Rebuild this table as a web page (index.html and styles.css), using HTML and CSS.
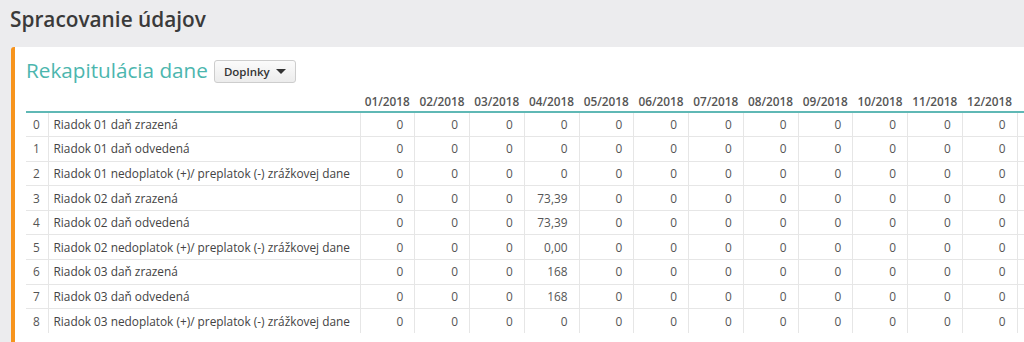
FILE: index.html
```html
<!DOCTYPE html>
<html lang="sk">
<head>
<meta charset="utf-8">
<title>Spracovanie údajov</title>
<link rel="stylesheet" href="styles.css">
</head>
<body>
<div class="page">
  <h1 class="page-title">Spracovanie údajov</h1>
  <div class="panel">
    <div class="panel-head">
      <h2 class="panel-title">Rekapitulácia dane</h2>
      <button class="btn">Doplnky <span class="caret"></span></button>
    </div>
    <div class="table-wrap">
      <table class="grid">
        <colgroup>
          <col class="c-idx"><col class="c-label">
          <col class="c-m"><col class="c-m"><col class="c-m"><col class="c-m"><col class="c-m"><col class="c-m">
          <col class="c-m"><col class="c-m"><col class="c-m"><col class="c-m"><col class="c-m"><col class="c-m">
          <col class="c-sum">
        </colgroup>
        <thead>
          <tr>
            <th></th><th></th>
            <th>01/2018</th><th>02/2018</th><th>03/2018</th><th>04/2018</th><th>05/2018</th><th>06/2018</th>
            <th>07/2018</th><th>08/2018</th><th>09/2018</th><th>10/2018</th><th>11/2018</th><th>12/2018</th>
            <th></th>
          </tr>
        </thead>
        <tbody>
          <tr><td>0</td><td>Riadok 01 daň zrazená</td><td>0</td><td>0</td><td>0</td><td>0</td><td>0</td><td>0</td><td>0</td><td>0</td><td>0</td><td>0</td><td>0</td><td>0</td><td></td></tr>
          <tr><td>1</td><td>Riadok 01 daň odvedená</td><td>0</td><td>0</td><td>0</td><td>0</td><td>0</td><td>0</td><td>0</td><td>0</td><td>0</td><td>0</td><td>0</td><td>0</td><td></td></tr>
          <tr><td>2</td><td>Riadok 01 nedoplatok (+)/ preplatok (-) zrážkovej dane</td><td>0</td><td>0</td><td>0</td><td>0</td><td>0</td><td>0</td><td>0</td><td>0</td><td>0</td><td>0</td><td>0</td><td>0</td><td></td></tr>
          <tr><td>3</td><td>Riadok 02 daň zrazená</td><td>0</td><td>0</td><td>0</td><td>73,39</td><td>0</td><td>0</td><td>0</td><td>0</td><td>0</td><td>0</td><td>0</td><td>0</td><td></td></tr>
          <tr><td>4</td><td>Riadok 02 daň odvedená</td><td>0</td><td>0</td><td>0</td><td>73,39</td><td>0</td><td>0</td><td>0</td><td>0</td><td>0</td><td>0</td><td>0</td><td>0</td><td></td></tr>
          <tr><td>5</td><td>Riadok 02 nedoplatok (+)/ preplatok (-) zrážkovej dane</td><td>0</td><td>0</td><td>0</td><td>0,00</td><td>0</td><td>0</td><td>0</td><td>0</td><td>0</td><td>0</td><td>0</td><td>0</td><td></td></tr>
          <tr><td>6</td><td>Riadok 03 daň zrazená</td><td>0</td><td>0</td><td>0</td><td>168</td><td>0</td><td>0</td><td>0</td><td>0</td><td>0</td><td>0</td><td>0</td><td>0</td><td></td></tr>
          <tr><td>7</td><td>Riadok 03 daň odvedená</td><td>0</td><td>0</td><td>0</td><td>168</td><td>0</td><td>0</td><td>0</td><td>0</td><td>0</td><td>0</td><td>0</td><td>0</td><td></td></tr>
          <tr><td>8</td><td>Riadok 03 nedoplatok (+)/ preplatok (-) zrážkovej dane</td><td>0</td><td>0</td><td>0</td><td>0</td><td>0</td><td>0</td><td>0</td><td>0</td><td>0</td><td>0</td><td>0</td><td>0</td><td></td></tr>
        </tbody>
      </table>
    </div>
  </div>
</div>
</body>
</html>
```

FILE: styles.css
```css
html, body {
  margin: 0;
  padding: 0;
  background: #ececee;
  font-family: "Open Sans", "DejaVu Sans", sans-serif;
  color: #555;
  overflow: hidden;
}

.page {
  padding: 0 0 0 11px;
  height: 342px;
}

.page-title {
  margin: 0 0 0 -1px;
  padding: 5px 0 0 0;
  height: 42px;
  box-sizing: border-box;
  font-size: 20.8px;
  font-weight: 600;
  color: #3a3a3a;
  line-height: 29px;
}

.panel {
  margin-top: 5px;
  background: #fff;
  border-left: 4px solid #f7941d;
  border-radius: 3px 0 0 0;
  height: 300px;
  overflow: hidden;
  padding-left: 11px;
}

.panel-head {
  display: flex;
  align-items: center;
  gap: 6px;
  height: 44px;
  padding-top: 2px;
  box-sizing: border-box;
}

.panel-title {
  margin: 0;
  font-size: 20.7px;
  font-weight: 400;
  color: #4cb6ae;
  line-height: 26px;
}

.btn {
  font-family: "Open Sans", "DejaVu Sans", sans-serif;
  font-size: 11.5px;
  font-weight: 600;
  color: #333;
  background: linear-gradient(#fbfbfb, #ececec);
  border: 1px solid #cdcdcd;
  border-radius: 3px;
  height: 23px;
  padding: 0 9px;
  display: flex;
  align-items: center;
  gap: 6px;
  margin-top: 2px;
}

.caret {
  width: 0;
  height: 0;
  border-left: 5px solid transparent;
  border-right: 5px solid transparent;
  border-top: 5px solid #333;
}

.table-wrap {
  width: 1100px;
}

.grid {
  border-collapse: collapse;
  table-layout: fixed;
  width: 1051px;
  font-size: 11.85px;
}

.c-idx { width: 22px; }
.c-label { width: 312px; }
.c-m { width: 54.75px; }
.c-sum { width: 60px; }

.grid th {
  font-weight: 600;
  font-size: 11.8px;
  color: #555;
  text-align: right;
  padding: 0 5px 2px 0;
  height: 18px;
  line-height: 16px;
  vertical-align: bottom;
  border-bottom: 2px solid #5fb8b5;
  white-space: nowrap;
}

.grid td {
  padding: 0 11px 0 5px;
  height: 24.6px;
  line-height: 17px;
  box-sizing: border-box;
  text-align: right;
  color: #555;
  border-top: 1px solid #e6e6e6;
  border-left: 1px solid #e6e6e6;
  white-space: nowrap;
}

.grid tbody tr:first-child td {
  border-top: 0;
}

.grid td:first-child {
  border-left: 0;
  text-align: left;
  padding: 0 0 0 7px;
}

.grid td:nth-child(2) {
  text-align: left;
  padding-left: 5px;
  color: #444;
}
```
